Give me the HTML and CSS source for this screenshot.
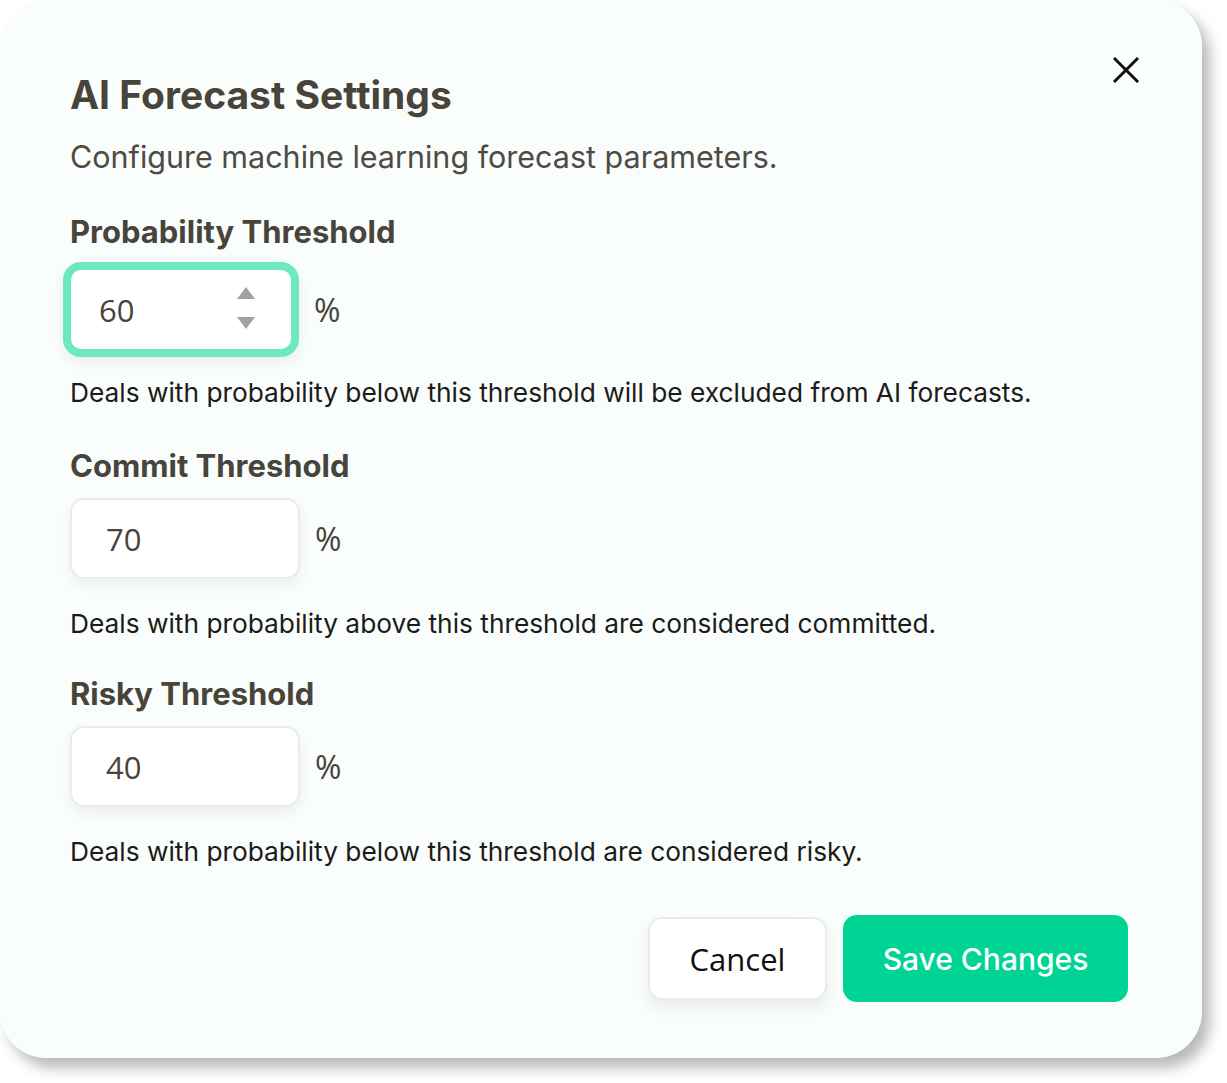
FILE: index.html
```html
<!DOCTYPE html>
<html lang="en">
<head>
<meta charset="utf-8">
<title>AI Forecast Settings</title>
<link rel="stylesheet" href="styles.css">
</head>
<body>
<div class="dialog">
  <button class="close" aria-label="Close">
    <svg width="26" height="26" viewBox="0 0 26 26"><path d="M2 2 L24 24 M24 2 L2 24" stroke="#111" stroke-width="3" stroke-linecap="square" fill="none"/></svg>
  </button>
  <h1 class="title">AI Forecast Settings</h1>
  <p class="subtitle">Configure machine learning forecast parameters.</p>

  <div class="field">
    <div class="field-label">Probability Threshold</div>
    <div class="input-row input-row--active">
      <div class="input input--focused">
        <span class="value">60</span>
        <span class="spinner"><span class="tri tri-up"></span><span class="tri tri-down"></span></span>
      </div>
      <span class="unit">%</span>
    </div>
    <p class="desc desc--active">Deals with probability below this threshold will be excluded from AI forecasts.</p>
  </div>

  <div class="field">
    <div class="field-label">Commit Threshold</div>
    <div class="input-row">
      <div class="input"><span class="value">70</span></div>
      <span class="unit">%</span>
    </div>
    <p class="desc">Deals with probability above this threshold are considered committed.</p>
  </div>

  <div class="field field--last">
    <div class="field-label">Risky Threshold</div>
    <div class="input-row">
      <div class="input"><span class="value">40</span></div>
      <span class="unit">%</span>
    </div>
    <p class="desc">Deals with probability below this threshold are considered risky.</p>
  </div>

  <div class="actions">
    <button class="btn btn-cancel">Cancel</button>
    <button class="btn btn-save">Save Changes</button>
  </div>
</div>
</body>
</html>
```

FILE: styles.css
```css
* { box-sizing: border-box; }
html, body { margin: 0; padding: 0; background: #ffffff; }
body {
  font-family: Inter, "Noto Sans", sans-serif;
  width: 1227px;
  height: 1083px;
  overflow: hidden;
}
.dialog {
  position: relative;
  width: 1202px;
  height: 1058px;
  background: #f9fdfc;
  border-radius: 46px;
  box-shadow: 8px 10px 14px rgba(0, 0, 0, 0.28);
  padding: 73px 74px 56px 70px;
  display: flex;
  flex-direction: column;
}
.close {
  position: absolute;
  top: 57px;
  right: 63px;
  width: 26px;
  height: 26px;
  padding: 0;
  border: 0;
  background: transparent;
  display: flex;
}
.title {
  margin: 0;
  font-size: 39px;
  line-height: 44px;
  font-weight: 700;
  color: #48443a;
}
.subtitle {
  margin: 22px 0 0;
  font-size: 30.5px;
  line-height: 36px;
  font-weight: 400;
  color: #4f4b42;
}
.field { margin-top: 39px; }
.field--last { margin-top: 36px; }
.field-label {
  font-size: 31px;
  line-height: 36px;
  font-weight: 700;
  color: #48443a;
}
.input-row {
  display: flex;
  align-items: center;
  gap: 15px;
  margin-top: 14px;
}
.input-row--active { margin-top: 12px; }
.input {
  width: 230px;
  height: 81px;
  background: #ffffff;
  border: 2px solid #ebeaef;
  border-radius: 14px;
  box-shadow: 0 6px 14px rgba(0, 0, 0, 0.06);
  display: flex;
  align-items: center;
  padding-left: 34px;
  padding-right: 36px;
}
.input--focused {
  width: 236px;
  height: 95px;
  border: 8px solid #6ee7c3;
  border-radius: 18px;
  margin-left: -7px;
  padding-left: 28px;
  justify-content: space-between;
}
.value {
  font-family: "Open Sans", "Noto Sans", sans-serif;
  font-size: 31px;
  color: #48443a;
}
.spinner {
  display: flex;
  flex-direction: column;
  gap: 18px;
  margin-top: -3px;
}
.tri {
  width: 0;
  height: 0;
  border-left: 9px solid transparent;
  border-right: 9px solid transparent;
}
.tri-up { border-bottom: 12px solid #a3a19b; }
.tri-down { border-top: 12px solid #a3a19b; }
.unit {
  font-family: "Open Sans", "Noto Sans", sans-serif;
  font-size: 32px;
  color: #48443a;
}
.desc {
  margin: 29px 0 0;
  font-size: 26.3px;
  line-height: 32px;
  color: #1c1b18;
}
.desc--active { margin-top: 20px; }
.actions {
  display: flex;
  justify-content: flex-end;
  align-items: center;
  gap: 16px;
  margin-top: 47px;
}
.btn {
  border-radius: 14px;
  cursor: pointer;
}
.btn-cancel {
  width: 179px;
  height: 83px;
  background: #ffffff;
  border: 2px solid #ebeaef;
  box-shadow: 0 8px 16px rgba(0, 0, 0, 0.07);
  font-family: "Open Sans", "Noto Sans", sans-serif;
  font-size: 31px;
  color: #111111;
}
.btn-save {
  width: 285px;
  height: 87px;
  background: #00d494;
  border: 0;
  font-family: Inter, sans-serif;
  font-size: 30px;
  font-weight: 500;
  color: #ffffff;
}
```
